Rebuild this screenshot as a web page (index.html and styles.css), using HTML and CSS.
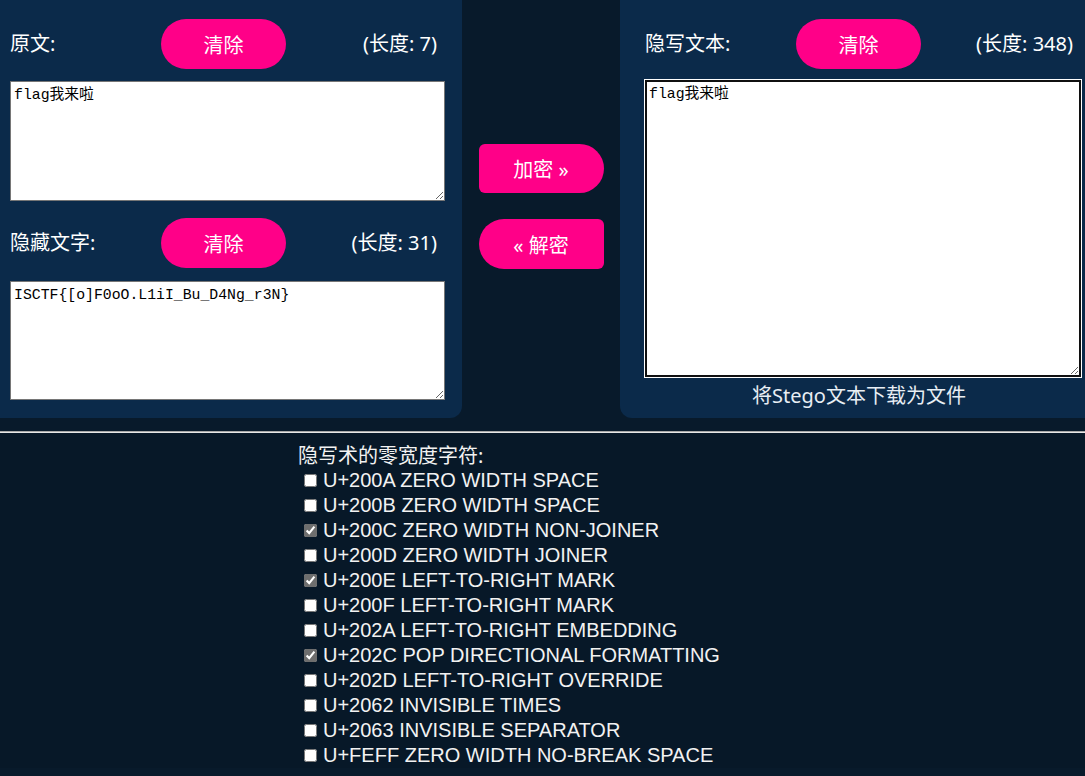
FILE: index.html
```html
<!DOCTYPE html>
<html lang="zh-CN">
<head>
<meta charset="utf-8">
<title>Stego</title>
<link rel="stylesheet" href="styles.css">
</head>
<body>
<div class="main">
  <section class="panel panel-left">
    <div class="head">
      <span class="label">原文:</span>
      <button class="clear">清除</button>
      <span class="len">(长度: 7)</span>
    </div>
    <textarea class="ta">flag我来啦</textarea>
    <div class="head head-2">
      <span class="label">隐藏文字:</span>
      <button class="clear">清除</button>
      <span class="len">(长度: 31)</span>
    </div>
    <textarea class="ta">ISCTF{[o]F0oO.L1iI_Bu_D4Ng_r3N}</textarea>
  </section>
  <div class="middle">
    <button class="act act-enc">加密 »</button>
    <button class="act act-dec">« 解密</button>
  </div>
  <section class="panel panel-right">
    <div class="head">
      <span class="label">隐写文本:</span>
      <button class="clear">清除</button>
      <span class="len">(长度: 348)</span>
    </div>
    <textarea class="ta ta-big">flag我来啦</textarea>
    <div class="download">将Stego文本下载为文件</div>
  </section>
</div>
<hr class="sep">
<div class="chars">
  <div class="chars-title">隐写术的零宽度字符:</div>
  <label class="item"><input type="checkbox">U+200A ZERO WIDTH SPACE</label>
  <label class="item"><input type="checkbox">U+200B ZERO WIDTH SPACE</label>
  <label class="item"><input type="checkbox" checked>U+200C ZERO WIDTH NON-JOINER</label>
  <label class="item"><input type="checkbox">U+200D ZERO WIDTH JOINER</label>
  <label class="item"><input type="checkbox" checked>U+200E LEFT-TO-RIGHT MARK</label>
  <label class="item"><input type="checkbox">U+200F LEFT-TO-RIGHT MARK</label>
  <label class="item"><input type="checkbox">U+202A LEFT-TO-RIGHT EMBEDDING</label>
  <label class="item"><input type="checkbox" checked>U+202C POP DIRECTIONAL FORMATTING</label>
  <label class="item"><input type="checkbox">U+202D LEFT-TO-RIGHT OVERRIDE</label>
  <label class="item"><input type="checkbox">U+2062 INVISIBLE TIMES</label>
  <label class="item"><input type="checkbox">U+2063 INVISIBLE SEPARATOR</label>
  <label class="item"><input type="checkbox">U+FEFF ZERO WIDTH NO-BREAK SPACE</label>
</div>
</body>
</html>
```

FILE: styles.css
```css
html, body {
  margin: 0;
  padding: 0;
  background: #081a2b;
  color: #ffffff;
  font-family: "Noto Sans", "Noto Sans CJK SC", sans-serif;
  font-size: 20px;
  overflow: hidden;
}

.main {
  display: flex;
  align-items: flex-start;
  height: 418px;
}

.panel {
  background: #0b2a4a;
  box-sizing: border-box;
  height: 418px;
  display: flex;
  flex-direction: column;
}

.panel-left {
  width: 462px;
  padding: 19px 17px 0 10px;
  border-radius: 0 0 12px 0;
}

.panel-right {
  width: 465px;
  padding: 19px 4px 0 25px;
  border-radius: 0 0 0 12px;
}

.head {
  display: flex;
  align-items: center;
  height: 50px;
  padding-right: 8px;
}

.head-2 {
  margin-top: 17px;
}

.label {
  width: 151px;
  flex: none;
  line-height: 24px;
}

.len {
  margin-left: auto;
  line-height: 24px;
}

.clear {
  width: 125px;
  height: 50px;
  border: none;
  border-radius: 25px;
  background: #ff0088;
  color: #ffffff;
  font-family: "Noto Sans", "Noto Sans CJK SC", sans-serif;
  font-size: 20px;
  padding: 0;
}

.ta {
  display: block;
  box-sizing: border-box;
  width: 435px;
  height: 120px;
  margin-top: 12px;
  border: 1px solid #767676;
  padding: 3px 3px 1px;
  background: #ffffff;
  color: #000000;
  font-family: "Liberation Mono", "Noto Sans CJK SC", monospace;
  font-size: 14.8px;
  line-height: 20px;
  resize: vertical;
}

.panel-left .head-2 + .ta {
  height: 119px;
  margin-top: 13px;
}

.ta-big {
  width: 436px;
  height: 297px;
  margin-top: 11px;
  border: 2px solid #101010;
  padding: 2px 2px 0;
  box-shadow: 0 0 0 1px #ffffff;
  outline: none;
}

.download {
  text-align: center;
  color: #e8eef4;
  line-height: 24px;
  margin-top: 7px;
  padding-right: 8px;
}

.middle {
  width: 158px;
  flex: none;
  display: flex;
  flex-direction: column;
  align-items: center;
  padding-top: 144px;
  gap: 26px;
}

.act {
  width: 125px;
  height: 50px;
  border: none;
  background: #ff0088;
  color: #ffffff;
  font-family: "Noto Sans", "Noto Sans CJK SC", sans-serif;
  font-size: 20px;
  padding: 0;
}

.act-enc {
  height: 49px;
  border-radius: 6px 25px 25px 6px;
}

.act-dec {
  border-radius: 25px 6px 6px 25px;
}

.sep {
  margin: 13px 0 0 0;
  border: none;
  border-top: 1px solid #a8a8a8;
  border-bottom: 1px solid #e6e6e6;
  height: 0;
}

.chars {
  padding-left: 298px;
  padding-top: 10px;
  background: #071828;
}

.chars-title {
  line-height: 25px;
  font-size: 20px;
  color: #f2f2f2;
}

.item {
  display: flex;
  align-items: center;
  height: 25px;
  line-height: 25px;
  font-family: "Liberation Sans", "Noto Sans", sans-serif;
  font-size: 20px;
  color: #f2f2f2;
}

.item input {
  width: 13px;
  height: 13px;
  margin: 0 6px 0 6px;
  accent-color: #6e6e6e;
}
```
